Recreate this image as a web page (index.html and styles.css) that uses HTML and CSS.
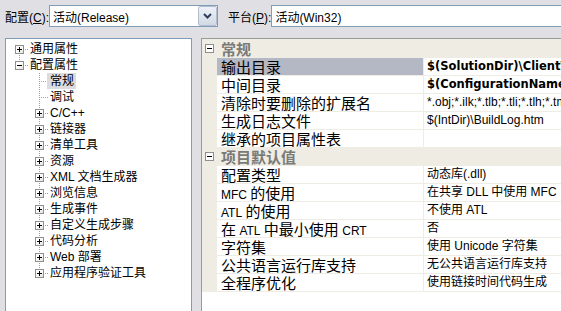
FILE: index.html
```html
<!DOCTYPE html>
<html lang="zh-CN">
<head>
    <meta charset="UTF-8">
    <title>属性页</title>
    <link rel="stylesheet" href="styles.css">
</head>
<body>
    <div class="toolbar">
        <label class="lbl">配置(<u>C</u>):</label>
        <div class="combo combo-cfg">
            <span>活动(Release)</span>
            <b class="drop">
                <svg width="9" height="6" viewBox="0 0 9 6"><path d="M1 1l3.5 3.5L8 1" fill="none" stroke="#2f3f5f" stroke-width="2"/></svg>
            </b>
        </div>
        <label class="lbl lbl-plat">平台(<u>P</u>):</label>
        <div class="combo combo-plat">
            <span>活动(Win32)</span>
        </div>
    </div>

    <div class="panes">
        <!-- left: property tree -->
        <div class="tree">
            <div class="node root first"><i class="exp plus"></i><span class="txt">通用属性</span></div>
            <div class="node root last"><i class="exp minus"></i><span class="txt">配置属性</span></div>
            <div class="node child leaf"><span class="txt sel">常规</span></div>
            <div class="node child leaf"><span class="txt">调试</span></div>
            <div class="node child"><i class="exp plus"></i><span class="txt">C/C++</span></div>
            <div class="node child"><i class="exp plus"></i><span class="txt">链接器</span></div>
            <div class="node child"><i class="exp plus"></i><span class="txt">清单工具</span></div>
            <div class="node child"><i class="exp plus"></i><span class="txt">资源</span></div>
            <div class="node child"><i class="exp plus"></i><span class="txt">XML 文档生成器</span></div>
            <div class="node child"><i class="exp plus"></i><span class="txt">浏览信息</span></div>
            <div class="node child"><i class="exp plus"></i><span class="txt">生成事件</span></div>
            <div class="node child"><i class="exp plus"></i><span class="txt">自定义生成步骤</span></div>
            <div class="node child"><i class="exp plus"></i><span class="txt">代码分析</span></div>
            <div class="node child"><i class="exp plus"></i><span class="txt">Web 部署</span></div>
            <div class="node child last"><i class="exp plus"></i><span class="txt">应用程序验证工具</span></div>
        </div>

        <!-- right: property grid -->
        <div class="grid">
            <div class="rows">
                <div class="cat"><i class="exp minus"></i><span>常规</span></div>

                <span class="gut"></span><span class="name sel">输出目录</span><span class="val bold">$(SolutionDir)\Client\</span>
                <span class="gut"></span><span class="name">中间目录</span><span class="val bold">$(ConfigurationName)</span>
                <span class="gut"></span><span class="name">清除时要删除的扩展名</span><span class="val">*.obj;*.ilk;*.tlb;*.tli;*.tlh;*.tmp</span>
                <span class="gut"></span><span class="name">生成日志文件</span><span class="val">$(IntDir)\BuildLog.htm</span>
                <span class="gut"></span><span class="name">继承的项目属性表</span><span class="val"></span>

                <div class="cat"><i class="exp minus"></i><span>项目默认值</span></div>

                <span class="gut"></span><span class="name">配置类型</span><span class="val">动态库(.dll)</span>
                <span class="gut"></span><span class="name"><span class="lat">MFC</span> 的使用</span><span class="val">在共享 DLL 中使用 MFC</span>
                <span class="gut"></span><span class="name"><span class="lat">ATL</span> 的使用</span><span class="val">不使用 ATL</span>
                <span class="gut"></span><span class="name">在 <span class="lat">ATL</span> 中最小使用 <span class="lat">CRT</span></span><span class="val">否</span>
                <span class="gut"></span><span class="name">字符集</span><span class="val">使用 Unicode 字符集</span>
                <span class="gut"></span><span class="name">公共语言运行库支持</span><span class="val">无公共语言运行库支持</span>
                <span class="gut"></span><span class="name">全程序优化</span><span class="val">使用链接时间代码生成</span>
            </div>
        </div>
    </div>
</body>
</html>
```

FILE: styles.css
```css
html, body {
    margin: 0;
    padding: 0;
    overflow: hidden;
}
body {
    width: 561px;
    height: 311px;
    background: #e0dfe3;
    font-family: "Liberation Sans", "Noto Sans CJK SC", sans-serif;
    font-size: 12px;
    color: #000;
}

/* top bar with the two combo boxes */
.toolbar {
    display: flex;
    align-items: center;
    height: 22px;
    padding: 5px 0 11px 5px;
}
.lbl {
    width: 55px;
    white-space: nowrap;
}
.lbl-plat {
    margin-left: 10px;
}
.combo {
    height: 22px;
    box-sizing: border-box;
    border: 1px solid #7f9db9;
    background: #fff;
    display: flex;
    align-items: center;
    padding-left: 3px;
    flex-shrink: 0;
}
.combo-cfg {
    width: 169px;
}
.combo-plat {
    width: 300px;
}
.drop {
    margin-left: auto;
    width: 19px;
    height: 20px;
    box-sizing: border-box;
    border: 1px solid #b2bdd0;
    border-radius: 2px;
    background: linear-gradient(#eef1f6, #d3d9e4);
    display: flex;
    align-items: center;
    justify-content: center;
}

.panes {
    display: flex;
    gap: 9px;
    padding-left: 5px;
}

/* tree view */
.tree {
    width: 187px;
    height: 290px;
    box-sizing: border-box;
    border: 1px solid #7f9db9;
    background: #fff;
    padding-top: 2px;
    flex-shrink: 0;
    --dot-v: repeating-linear-gradient(to bottom, #a0a0a0 0 1px, transparent 1px 2px);
    --dot-h: repeating-linear-gradient(to right, #a0a0a0 0 1px, transparent 1px 2px);
}
.node {
    height: 16px;
    display: flex;
    align-items: flex-start;
    white-space: nowrap;
}
.node .txt {
    height: 16px;
    line-height: 16px;
    padding: 0 2px 0 3px;
    margin-left: 3px;
}
.node .txt.sel {
    background: #dcdce0;
}
.root .exp {
    margin-left: 9px;
}
.root.first {
    background: var(--dot-h) 13px 8px / 10px 1px no-repeat,
                var(--dot-v) 13px 8px / 1px 8px no-repeat;
}
.root.last {
    background: var(--dot-h) 13px 8px / 10px 1px no-repeat,
                var(--dot-v) 13px 0 / 1px 8px no-repeat;
}
.child {
    background: var(--dot-h) 33px 8px / 10px 1px no-repeat,
                var(--dot-v) 33px 0 / 1px 16px no-repeat;
}
.child.last {
    background: var(--dot-h) 33px 8px / 10px 1px no-repeat,
                var(--dot-v) 33px 0 / 1px 9px no-repeat;
}
.child .exp {
    margin-left: 29px;
}
.child.leaf .txt {
    margin-left: 41px;
}

/* +/- boxes */
.exp {
    display: block;
    width: 9px;
    height: 9px;
    margin-top: 4px;
    box-sizing: border-box;
    border: 1px solid #8e8f8f;
    background-color: #fff;
    flex-shrink: 0;
}
.exp.plus {
    background: linear-gradient(#000, #000) 1px 3px / 5px 1px no-repeat,
                linear-gradient(#000, #000) 3px 1px / 1px 5px no-repeat,
                linear-gradient(135deg, #fff 40%, #e2e2dc);
}
.exp.minus {
    background: linear-gradient(#000, #000) 1px 3px / 5px 1px no-repeat,
                linear-gradient(135deg, #fff 40%, #e2e2dc);
}

/* property grid */
.grid {
    width: 380px;
    height: 290px;
    box-sizing: border-box;
    border: 1px solid #9a9a9a;
    background: #fff;
    flex-shrink: 0;
}
.rows {
    display: grid;
    grid-template-columns: 14px 206px 1fr;
    grid-auto-rows: 17px;
    gap: 1px;
    padding: 1px 0;
    background: #efede3;
}
.cat {
    grid-column: 1 / -1;
    display: flex;
    align-items: center;
    background: #efede3;
    font-family: "Noto Sans CJK SC", sans-serif;
    font-size: 15px;
    line-height: 17px;
    font-weight: bold;
    color: #7a7a78;
}
.cat .exp {
    margin: 0 7px 0 3px;
}
.cat .exp.minus {
    background: linear-gradient(#000, #000) 1px 3px / 5px 1px no-repeat, #fff;
}
.gut {
    background: #efede3;
}
.name, .val {
    background: #fff;
    white-space: nowrap;
    line-height: 17px;
}
.name {
    padding-left: 4px;
    font-family: "Noto Sans CJK SC", sans-serif;
    font-size: 15px;
}
.name .lat {
    font-family: "Liberation Sans", sans-serif;
    font-size: 12px;
}
.name.sel {
    background: #b4b8c5;
}
.val {
    padding-left: 3px;
}
.val.bold {
    font-weight: bold;
    font-family: "DejaVu Sans", "Noto Sans CJK SC", sans-serif;
    font-size: 11.5px;
}
```
